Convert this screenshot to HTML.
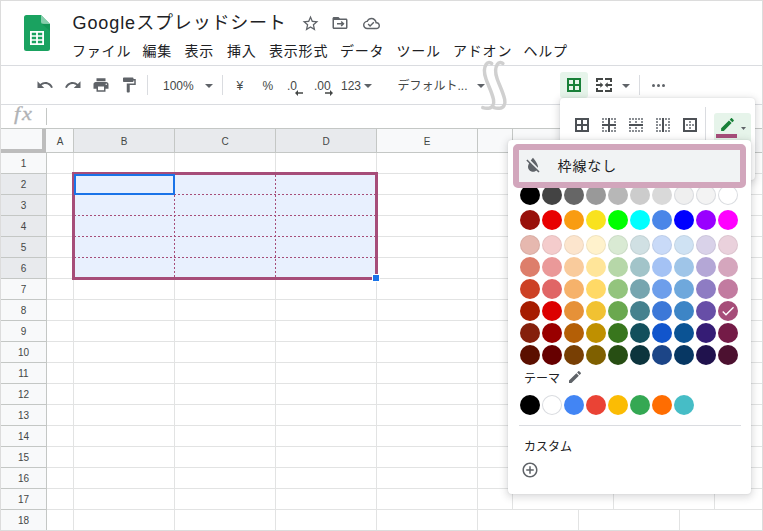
<!DOCTYPE html>
<html lang="ja"><head><meta charset="utf-8"><title>Google スプレッドシート</title>
<style>
html,body{margin:0;padding:0;}
body{width:763px;height:531px;overflow:hidden;background:#fff;position:relative;font-family:"Liberation Sans","Noto Sans CJK JP",sans-serif;color:#202124;}
#root{position:absolute;left:0;top:0;width:763px;height:531px;overflow:hidden;background:#fff;}
.a{position:absolute;}
.t{position:absolute;white-space:nowrap;line-height:1;}
.menu{font-size:14px;color:#202124;top:44px;letter-spacing:.8px;}
.tb{font-size:12px;color:#444746;}
.hl{position:absolute;height:1px;background:#e2e3e3;}
.vl{position:absolute;width:1px;background:#e2e3e3;}
.rh{position:absolute;left:1px;width:45px;height:20px;font-size:10px;color:#444746;text-align:center;line-height:22px;overflow:hidden;background:#f8f9fa;border-bottom:1px solid #c4c7c5;}
.rh.s{background:#e8eaed;}
.ch{position:absolute;top:129px;height:23px;font-size:10px;color:#444746;text-align:center;line-height:26px;overflow:hidden;background:#f8f9fa;border-right:1px solid #c4c7c5;}
.ch.s{background:#e8eaed;}
.c{position:absolute;width:20px;height:20px;border-radius:50%;}
svg{position:absolute;overflow:visible;}
</style></head><body><div id="root">

<!-- logo -->
<svg style="left:24px;top:15px" width="26" height="36" viewBox="0 0 26 36"><path d="M2.5 0H17l9 9v24.5a2.5 2.5 0 0 1-2.5 2.5h-21A2.5 2.5 0 0 1 0 33.500V2.5A2.500 2.500 0 0 1 2.500 0z" fill="#1aa260"/><path d="M17 0l9 9h-6.500A2.500 2.500 0 0 1 17 6.500z" fill="#87ceac"/><path d="M17.800 8.800L26 9v7z" fill="#0c8a4c" opacity=".5"/><path fill="#fff" fill-rule="evenodd" d="M6 16h14v14H6zM7.800 17.800v2.500h4.300v-2.500zM13.900 17.800v2.500h4.300v-2.500zM7.800 21.800v2.400h4.300v-2.400zM13.900 21.800v2.400h4.300v-2.400zM7.800 25.700v2.500h4.300v-2.500zM13.900 25.700v2.500h4.300v-2.500z"/></svg>
<div class="t" style="left:72.500px;top:13.500px;font-size:18px;color:#202124;letter-spacing:.8px;word-spacing:-5.500px;"><span style="letter-spacing:.9px">Google</span> スプレッドシート</div>
<svg style="left:301.100px;top:13.500px" width="19" height="19" viewBox="0 0 24 24"><path fill="#5f6368" d="M22 9.240l-7.190-.620L12 2 9.190 8.630 2 9.240l5.460 4.730L5.820 21 12 17.270 18.180 21l-1.630-7.030L22 9.240zM12 15.400l-3.760 2.270 1-4.280-3.320-2.880 4.380-.380L12 6.100l1.710 4.040 4.380.380-3.320 2.880 1 4.280L12 15.400z"/></svg>
<svg style="left:330.700px;top:14px" width="18" height="18" viewBox="0 0 24 24"><path fill="#5f6368" d="M20 6h-8l-2-2H4c-1.100 0-2 .900-2 2v12c0 1.100.900 2 2 2h16c1.100 0 2-.900 2-2V8c0-1.100-.900-2-2-2zm0 12H4V8h16v10zm-7.160-2.590L14.250 16.830 18 13l-3.750-3.830-1.410 1.420L14.170 12H8v2h6.170l-1.330 1.410z"/></svg>
<svg style="left:362.600px;top:14.600px" width="17" height="17" viewBox="0 0 24 24"><path fill="#5f6368" d="M19.350 10.040C18.670 6.590 15.640 4 12 4 9.110 4 6.600 5.640 5.350 8.040 2.340 8.360 0 10.910 0 14c0 3.310 2.690 6 6 6h13c2.760 0 5-2.240 5-5 0-2.640-2.050-4.780-4.650-4.960zM19 18H6c-2.210 0-4-1.790-4-4 0-2.050 1.530-3.760 3.560-3.970l1.070-.110.500-.950C8.080 7.140 9.940 6 12 6c2.620 0 4.880 1.860 5.390 4.430l.300 1.500 1.530.110c1.560.100 2.780 1.410 2.780 2.960 0 1.650-1.350 3-3 3zm-9-3.820l-2.090-2.090L6.500 13.500 10 17l6.010-6.010-1.410-1.410z"/></svg>
<div class="t menu" style="left:72px;">ファイル</div>
<div class="t menu" style="left:142.5px;">編集</div>
<div class="t menu" style="left:184.5px;">表示</div>
<div class="t menu" style="left:227px;">挿入</div>
<div class="t menu" style="left:269px;">表示形式</div>
<div class="t menu" style="left:340px;">データ</div>
<div class="t menu" style="left:396.5px;">ツール</div>
<div class="t menu" style="left:453px;">アドオン</div>
<div class="t menu" style="left:523.5px;">ヘルプ</div>
<div class="hl" style="left:0;top:65px;width:763px;background:#dadce0;"></div>
<div class="hl" style="left:0;top:104px;width:763px;background:#dadce0;"></div>
<div class="hl" style="left:0;top:128px;width:763px;background:#c4c7c5;"></div>
<svg style="left:35.5px;top:76px" width="18" height="18" viewBox="0 0 24 24"><path fill="#5f6368" d="M12.500 8c-2.650 0-5.050.990-6.900 2.600L2 7v9h9l-3.620-3.620c1.390-1.160 3.160-1.880 5.120-1.880 3.540 0 6.550 2.310 7.600 5.500l2.370-.780C21.080 11.030 17.150 8 12.500 8z"/></svg>
<svg style="left:64px;top:76px" width="18" height="18" viewBox="0 0 24 24"><path fill="#5f6368" d="M18.400 10.600C16.550 8.990 14.150 8 11.500 8c-4.650 0-8.580 3.030-9.960 7.220L3.900 16c1.050-3.190 4.050-5.500 7.600-5.500 1.950 0 3.730.720 5.120 1.880L13 16h9V7l-3.600 3.600z"/></svg>
<svg style="left:92px;top:75.5px" width="18" height="18" viewBox="0 0 24 24"><path fill="#5f6368" d="M19 8H5c-1.660 0-3 1.340-3 3v6h4v4h12v-4h4v-6c0-1.660-1.340-3-3-3zm-3 11H8v-5h8v5zm3-7c-.550 0-1-.450-1-1s.450-1 1-1 1 .450 1 1-.450 1-1 1zm-1-9H6v4h12V3z"/></svg>
<svg style="left:120px;top:75.5px" width="18" height="18" viewBox="0 0 24 24"><path fill="#5f6368" d="M18 4V3c0-.550-.450-1-1-1H5c-.550 0-1 .450-1 1v4c0 .550.450 1 1 1h12c.550 0 1-.450 1-1V6h1v4H9v11c0 .550.450 1 1 1h2c.550 0 1-.450 1-1v-9h8V4h-3z"/></svg>
<div class="vl" style="left:147px;top:75px;height:20px;background:#dadce0;"></div>
<div class="vl" style="left:222px;top:75px;height:20px;background:#dadce0;"></div>
<div class="vl" style="left:639px;top:75px;height:20px;background:#dadce0;"></div>
<div class="t tb" style="left:163px;top:79.500px;">100%</div>
<svg style="left:205px;top:84px" width="8" height="4" viewBox="0 0 8 4"><path fill="#5f6368" d="M0 0h8L4.0 4z"/></svg>
<div class="t tb" style="left:236.500px;top:79.500px;">¥</div>
<div class="t tb" style="left:262.500px;top:79.500px;">%</div>
<div class="t tb" style="left:287px;top:79.500px;">.0</div>
<svg style="left:295px;top:90px" width="8" height="6" viewBox="0 0 8 6"><path fill="#444746" d="M0 3l3-3v2.300h5v1.400H3V6z"/></svg>
<div class="t tb" style="left:314px;top:79.500px;">.00</div>
<svg style="left:325px;top:90px" width="8" height="6" viewBox="0 0 8 6"><path fill="#444746" d="M8 3L5 0v2.300H0v1.400h5V6z"/></svg>
<div class="t tb" style="left:341px;top:79.500px;">123</div>
<svg style="left:363.5px;top:84px" width="8" height="4" viewBox="0 0 8 4"><path fill="#5f6368" d="M0 0h8L4.0 4z"/></svg>
<div class="t tb" style="left:397.500px;top:79.500px;">デフォルト...</div>
<svg style="left:477px;top:84px" width="8" height="4" viewBox="0 0 8 4"><path fill="#5f6368" d="M0 0h8L4.0 4z"/></svg>
<svg style="left:470px;top:55px" width="50" height="60" viewBox="0 0 50 60"><g fill="none" stroke="#d0d0d0" stroke-width="3.500" stroke-linecap="round"><path d="M21.700 8.500C20.300 7 17.700 7 16.200 9.200 13.500 13 14 18 16 24 18.500 31 22 37.500 23.500 44.500 24.500 49.500 22.300 53.200 18.500 53.200 16.500 53.400 14.500 53.200 12.800 52.600"/><path transform="translate(11.200,0)" d="M21.700 8.500C20.300 7 17.700 7 16.200 9.200 13.500 13 14 18 16 24 18.500 31 22 37.500 23.500 44.500 24.500 49.500 22.300 53.200 18.500 53.200 16.500 53.400 14.500 53.200 12.800 52.600"/></g></svg>
<div class="a" style="left:560px;top:72px;width:28px;height:26px;background:#e6f4ea;border-radius:3px;"></div>
<svg style="left:567px;top:78px" width="14" height="14" viewBox="0 0 14 14" shape-rendering="crispEdges"><rect x="0" y="0" width="14" height="2" fill="#188038"/><rect x="0" y="12" width="14" height="2" fill="#188038"/><rect x="0" y="0" width="2" height="14" fill="#188038"/><rect x="12" y="0" width="2" height="14" fill="#188038"/><rect x="6" y="0" width="2" height="14" fill="#188038"/><rect x="0" y="6" width="14" height="2" fill="#188038"/></svg>
<svg style="left:596px;top:78px" width="16" height="14" viewBox="0 0 16 14" shape-rendering="crispEdges"><g fill="#444746"><path d="M0 0h7v2H2v2H0zM9 0h7v4h-2V2H9zM0 10h2v2h5v2H0zM14 10h2v4H9v-2h5zM0 6h5v2H0zM11 6h5v2h-5z"/></g><g fill="#444746" shape-rendering="geometricPrecision"><path d="M4.300 4.200L7.300 7l-3 2.800zM11.700 4.200L8.700 7l3 2.800z"/></g></svg>
<svg style="left:622px;top:84px" width="8" height="4" viewBox="0 0 8 4"><path fill="#5f6368" d="M0 0h8L4.0 4z"/></svg>
<div class="a" style="left:651.5px;top:83.500px;width:3px;height:3px;border-radius:50%;background:#5f6368;"></div>
<div class="a" style="left:656.5px;top:83.500px;width:3px;height:3px;border-radius:50%;background:#5f6368;"></div>
<div class="a" style="left:661.5px;top:83.500px;width:3px;height:3px;border-radius:50%;background:#5f6368;"></div>
<div class="t" style="left:14px;top:102px;font-family:'Liberation Serif',serif;font-style:italic;font-size:20px;letter-spacing:1.500px;color:#b0b2b5;line-height:24px;-webkit-text-stroke:.3px #b0b2b5;transform:scale(1.120,.940);transform-origin:0 0;">fx</div>
<div class="vl" style="left:46px;top:108px;height:17px;background:#c4c7c5;"></div>
<!-- grid -->
<div class="hl" style="left:46px;top:152px;width:716px;"></div>
<div class="hl" style="left:46px;top:173px;width:716px;"></div>
<div class="hl" style="left:46px;top:194px;width:716px;"></div>
<div class="hl" style="left:46px;top:215px;width:716px;"></div>
<div class="hl" style="left:46px;top:236px;width:716px;"></div>
<div class="hl" style="left:46px;top:257px;width:716px;"></div>
<div class="hl" style="left:46px;top:278px;width:716px;"></div>
<div class="hl" style="left:46px;top:299px;width:716px;"></div>
<div class="hl" style="left:46px;top:320px;width:716px;"></div>
<div class="hl" style="left:46px;top:341px;width:716px;"></div>
<div class="hl" style="left:46px;top:362px;width:716px;"></div>
<div class="hl" style="left:46px;top:383px;width:716px;"></div>
<div class="hl" style="left:46px;top:404px;width:716px;"></div>
<div class="hl" style="left:46px;top:425px;width:716px;"></div>
<div class="hl" style="left:46px;top:446px;width:716px;"></div>
<div class="hl" style="left:46px;top:467px;width:716px;"></div>
<div class="hl" style="left:46px;top:488px;width:716px;"></div>
<div class="hl" style="left:46px;top:509px;width:716px;"></div>
<div class="hl" style="left:46px;top:530px;width:716px;"></div>
<div class="vl" style="left:73px;top:152px;height:378px;"></div>
<div class="vl" style="left:174px;top:152px;height:378px;"></div>
<div class="vl" style="left:275px;top:152px;height:378px;"></div>
<div class="vl" style="left:376px;top:152px;height:378px;"></div>
<div class="vl" style="left:477px;top:152px;height:378px;"></div>
<div class="vl" style="left:578px;top:509px;height:21px;"></div>
<div class="vl" style="left:679px;top:509px;height:21px;"></div>
<div class="vl" style="left:512px;top:488px;height:21px;"></div>
<div class="vl" style="left:613px;top:488px;height:21px;"></div>
<div class="vl" style="left:714px;top:488px;height:21px;"></div>
<div class="a" style="left:1px;top:129px;width:761px;height:23px;background:#f8f9fa;border-bottom:1px solid #c4c7c5;"></div>
<div class="ch" style="left:47px;width:26px;">A</div>
<div class="ch s" style="left:74px;width:100px;">B</div>
<div class="ch s" style="left:175px;width:100px;">C</div>
<div class="ch s" style="left:276px;width:100px;">D</div>
<div class="ch" style="left:377px;width:100px;">E</div>
<div class="ch" style="left:478px;width:34px;"></div>
<div class="a" style="left:1px;top:129px;width:41px;height:20px;background:#f8f9fa;border-right:4px solid #bdbdbd;border-bottom:4px solid #bdbdbd;"></div>
<div class="rh" style="top:153px;">1</div>
<div class="rh s" style="top:174px;">2</div>
<div class="rh s" style="top:195px;">3</div>
<div class="rh s" style="top:216px;">4</div>
<div class="rh s" style="top:237px;">5</div>
<div class="rh s" style="top:258px;">6</div>
<div class="rh" style="top:279px;">7</div>
<div class="rh" style="top:300px;">8</div>
<div class="rh" style="top:321px;">9</div>
<div class="rh" style="top:342px;">10</div>
<div class="rh" style="top:363px;">11</div>
<div class="rh" style="top:384px;">12</div>
<div class="rh" style="top:405px;">13</div>
<div class="rh" style="top:426px;">14</div>
<div class="rh" style="top:447px;">15</div>
<div class="rh" style="top:468px;">16</div>
<div class="rh" style="top:489px;">17</div>
<div class="rh" style="top:510px;">18</div>
<div class="vl" style="left:46px;top:152px;height:378px;background:#c4c7c5;"></div>
<div class="a" style="left:75px;top:175px;width:300px;height:102px;background:#e8f0fe;"></div>
<div class="a" style="left:75px;top:215px;width:300px;height:1px;background:linear-gradient(90deg,#a64d79 0 2px,transparent 2px 4px) 3px 0/4px 1px repeat-x;"></div>
<div class="a" style="left:75px;top:236px;width:300px;height:1px;background:linear-gradient(90deg,#a64d79 0 2px,transparent 2px 4px) 3px 0/4px 1px repeat-x;"></div>
<div class="a" style="left:75px;top:257px;width:300px;height:1px;background:linear-gradient(90deg,#a64d79 0 2px,transparent 2px 4px) 3px 0/4px 1px repeat-x;"></div>
<div class="a" style="left:175px;top:194px;width:200px;height:1px;background:linear-gradient(90deg,#a64d79 0 2px,transparent 2px 4px) 3px 0/4px 1px repeat-x;"></div>
<div class="a" style="left:174px;top:195px;width:1px;height:82px;background:linear-gradient(180deg,#a64d79 0 2px,transparent 2px 4px) 0 0/1px 4px repeat-y;"></div>
<div class="a" style="left:275px;top:175px;width:1px;height:102px;background:linear-gradient(180deg,#a64d79 0 2px,transparent 2px 4px) 0 0/1px 4px repeat-y;"></div>
<div class="a" style="left:72px;top:172px;width:300px;height:102px;border:3px solid #a64d79;"></div>
<div class="a" style="left:74px;top:174px;width:97px;height:17px;border:2px solid #1a73e8;"></div>
<div class="a" style="left:372px;top:274px;width:6px;height:6px;background:#1a73e8;border:1px solid #fff;"></div>
<!-- border popup -->
<div class="a" style="left:560px;top:98px;width:194.500px;height:82px;background:#fff;border-radius:4px;box-shadow:0 2px 7px 2px rgba(60,64,67,.16),0 0 2px rgba(60,64,67,.12);"></div>
<svg style="left:575px;top:118px" width="14" height="14" viewBox="0 0 14 14" shape-rendering="crispEdges"><rect x="0" y="0" width="14" height="2" fill="#4d5156"/><rect x="0" y="12" width="14" height="2" fill="#4d5156"/><rect x="0" y="0" width="2" height="14" fill="#4d5156"/><rect x="12" y="0" width="2" height="14" fill="#4d5156"/><rect x="6" y="0" width="2" height="14" fill="#4d5156"/><rect x="0" y="6" width="14" height="2" fill="#4d5156"/></svg>
<svg style="left:602px;top:118px" width="14" height="14" viewBox="0 0 14 14" shape-rendering="crispEdges"><rect x="0" y="0" width="2" height="2" fill="#8a8e93"/><rect x="0" y="12" width="2" height="2" fill="#8a8e93"/><rect x="3" y="0" width="2" height="2" fill="#8a8e93"/><rect x="3" y="12" width="2" height="2" fill="#8a8e93"/><rect x="9" y="0" width="2" height="2" fill="#8a8e93"/><rect x="9" y="12" width="2" height="2" fill="#8a8e93"/><rect x="12" y="0" width="2" height="2" fill="#8a8e93"/><rect x="12" y="12" width="2" height="2" fill="#8a8e93"/><rect x="0" y="3" width="2" height="2" fill="#8a8e93"/><rect x="12" y="3" width="2" height="2" fill="#8a8e93"/><rect x="0" y="9" width="2" height="2" fill="#8a8e93"/><rect x="12" y="9" width="2" height="2" fill="#8a8e93"/><rect x="6" y="0" width="2" height="14" fill="#4d5156"/><rect x="0" y="6" width="14" height="2" fill="#4d5156"/></svg>
<svg style="left:629px;top:118px" width="14" height="14" viewBox="0 0 14 14" shape-rendering="crispEdges"><rect x="0" y="0" width="2" height="2" fill="#8a8e93"/><rect x="0" y="12" width="2" height="2" fill="#8a8e93"/><rect x="3" y="0" width="2" height="2" fill="#8a8e93"/><rect x="3" y="12" width="2" height="2" fill="#8a8e93"/><rect x="6" y="0" width="2" height="2" fill="#8a8e93"/><rect x="6" y="12" width="2" height="2" fill="#8a8e93"/><rect x="9" y="0" width="2" height="2" fill="#8a8e93"/><rect x="9" y="12" width="2" height="2" fill="#8a8e93"/><rect x="12" y="0" width="2" height="2" fill="#8a8e93"/><rect x="12" y="12" width="2" height="2" fill="#8a8e93"/><rect x="0" y="3" width="2" height="2" fill="#8a8e93"/><rect x="6" y="3" width="2" height="2" fill="#8a8e93"/><rect x="12" y="3" width="2" height="2" fill="#8a8e93"/><rect x="0" y="9" width="2" height="2" fill="#8a8e93"/><rect x="6" y="9" width="2" height="2" fill="#8a8e93"/><rect x="12" y="9" width="2" height="2" fill="#8a8e93"/><rect x="0" y="6" width="14" height="2" fill="#4d5156"/></svg>
<svg style="left:656px;top:118px" width="14" height="14" viewBox="0 0 14 14" shape-rendering="crispEdges"><rect x="0" y="0" width="2" height="2" fill="#8a8e93"/><rect x="12" y="0" width="2" height="2" fill="#8a8e93"/><rect x="0" y="3" width="2" height="2" fill="#8a8e93"/><rect x="12" y="3" width="2" height="2" fill="#8a8e93"/><rect x="0" y="6" width="2" height="2" fill="#8a8e93"/><rect x="12" y="6" width="2" height="2" fill="#8a8e93"/><rect x="0" y="9" width="2" height="2" fill="#8a8e93"/><rect x="12" y="9" width="2" height="2" fill="#8a8e93"/><rect x="0" y="12" width="2" height="2" fill="#8a8e93"/><rect x="12" y="12" width="2" height="2" fill="#8a8e93"/><rect x="3" y="0" width="2" height="2" fill="#8a8e93"/><rect x="3" y="6" width="2" height="2" fill="#8a8e93"/><rect x="3" y="12" width="2" height="2" fill="#8a8e93"/><rect x="9" y="0" width="2" height="2" fill="#8a8e93"/><rect x="9" y="6" width="2" height="2" fill="#8a8e93"/><rect x="9" y="12" width="2" height="2" fill="#8a8e93"/><rect x="6" y="0" width="2" height="14" fill="#4d5156"/></svg>
<svg style="left:683px;top:118px" width="14" height="14" viewBox="0 0 14 14" shape-rendering="crispEdges"><rect x="0" y="0" width="14" height="2" fill="#4d5156"/><rect x="0" y="12" width="14" height="2" fill="#4d5156"/><rect x="0" y="0" width="2" height="14" fill="#4d5156"/><rect x="12" y="0" width="2" height="14" fill="#4d5156"/><rect x="6" y="3" width="2" height="2" fill="#8a8e93"/><rect x="3" y="6" width="2" height="2" fill="#8a8e93"/><rect x="6" y="6" width="2" height="2" fill="#8a8e93"/><rect x="9" y="6" width="2" height="2" fill="#8a8e93"/><rect x="6" y="9" width="2" height="2" fill="#8a8e93"/></svg>
<div class="vl" style="left:705px;top:107px;height:33px;background:#dadce0;"></div>
<div class="a" style="left:714px;top:113px;width:37px;height:30px;background:#e6f4ea;border-radius:3px;"></div>
<svg style="left:718.5px;top:115.5px" width="17" height="17" viewBox="0 0 24 24"><path fill="#188038" d="M3 17.250V21h3.750L17.810 9.940l-3.750-3.750L3 17.250zM20.710 7.040c.390-.390.390-1.020 0-1.410l-2.340-2.340c-.390-.390-1.020-.390-1.410 0l-1.830 1.830 3.750 3.750 1.830-1.830z"/></svg>
<div class="a" style="left:716px;top:134px;width:21px;height:4px;background:#a64d79;"></div>
<svg style="left:741px;top:127px" width="5" height="3" viewBox="0 0 5 3"><path fill="#5f6368" d="M0 0h5L2.5 3z"/></svg>
<!-- color popup -->
<div class="a" style="left:508px;top:140px;width:243px;height:354px;background:#fff;border-radius:4px;box-shadow:0 2px 7px 2px rgba(60,64,67,.16),0 0 2px rgba(60,64,67,.12);"></div>
<div class="c" style="left:520px;top:185px;background:#000000;"></div>
<div class="c" style="left:542px;top:185px;background:#434343;"></div>
<div class="c" style="left:564px;top:185px;background:#666666;"></div>
<div class="c" style="left:586px;top:185px;background:#999999;"></div>
<div class="c" style="left:608px;top:185px;background:#b7b7b7;"></div>
<div class="c" style="left:630px;top:185px;background:#cccccc;"></div>
<div class="c" style="left:652px;top:185px;background:#d9d9d9;"></div>
<div class="c" style="left:674px;top:185px;background:#efefef;box-shadow:inset 0 0 0 1px #dadce0;"></div>
<div class="c" style="left:696px;top:185px;background:#f3f3f3;box-shadow:inset 0 0 0 1px #dadce0;"></div>
<div class="c" style="left:718px;top:185px;background:#ffffff;box-shadow:inset 0 0 0 1px #dadce0;"></div>
<div class="c" style="left:520px;top:210px;background:#98100a;"></div>
<div class="c" style="left:542px;top:210px;background:#e80000;"></div>
<div class="c" style="left:564px;top:210px;background:#f99c12;"></div>
<div class="c" style="left:586px;top:210px;background:#f9e21e;"></div>
<div class="c" style="left:608px;top:210px;background:#00ff00;"></div>
<div class="c" style="left:630px;top:210px;background:#00ffff;"></div>
<div class="c" style="left:652px;top:210px;background:#4a86e8;"></div>
<div class="c" style="left:674px;top:210px;background:#0000ff;"></div>
<div class="c" style="left:696px;top:210px;background:#9900ff;"></div>
<div class="c" style="left:718px;top:210px;background:#ff00ff;"></div>
<div class="c" style="left:520px;top:235px;background:#e6b8af;box-shadow:inset 0 0 0 1px rgba(0,0,0,.06);"></div>
<div class="c" style="left:542px;top:235px;background:#f4cccc;box-shadow:inset 0 0 0 1px rgba(0,0,0,.06);"></div>
<div class="c" style="left:564px;top:235px;background:#fce5cd;box-shadow:inset 0 0 0 1px rgba(0,0,0,.06);"></div>
<div class="c" style="left:586px;top:235px;background:#fff2cc;box-shadow:inset 0 0 0 1px rgba(0,0,0,.06);"></div>
<div class="c" style="left:608px;top:235px;background:#d9ead3;box-shadow:inset 0 0 0 1px rgba(0,0,0,.06);"></div>
<div class="c" style="left:630px;top:235px;background:#d0e0e3;box-shadow:inset 0 0 0 1px rgba(0,0,0,.06);"></div>
<div class="c" style="left:652px;top:235px;background:#c9daf8;box-shadow:inset 0 0 0 1px rgba(0,0,0,.06);"></div>
<div class="c" style="left:674px;top:235px;background:#cfe2f3;box-shadow:inset 0 0 0 1px rgba(0,0,0,.06);"></div>
<div class="c" style="left:696px;top:235px;background:#d9d2e9;box-shadow:inset 0 0 0 1px rgba(0,0,0,.06);"></div>
<div class="c" style="left:718px;top:235px;background:#ead1dc;box-shadow:inset 0 0 0 1px rgba(0,0,0,.06);"></div>
<div class="c" style="left:520px;top:257px;background:#dd7e6b;"></div>
<div class="c" style="left:542px;top:257px;background:#ea9999;"></div>
<div class="c" style="left:564px;top:257px;background:#f9cb9c;"></div>
<div class="c" style="left:586px;top:257px;background:#ffe599;"></div>
<div class="c" style="left:608px;top:257px;background:#b6d7a8;"></div>
<div class="c" style="left:630px;top:257px;background:#a2c4c9;"></div>
<div class="c" style="left:652px;top:257px;background:#a4c2f4;"></div>
<div class="c" style="left:674px;top:257px;background:#9fc5e8;"></div>
<div class="c" style="left:696px;top:257px;background:#b4a7d6;"></div>
<div class="c" style="left:718px;top:257px;background:#d5a6bd;"></div>
<div class="c" style="left:520px;top:279px;background:#cc4125;"></div>
<div class="c" style="left:542px;top:279px;background:#e06666;"></div>
<div class="c" style="left:564px;top:279px;background:#f6b26b;"></div>
<div class="c" style="left:586px;top:279px;background:#ffd966;"></div>
<div class="c" style="left:608px;top:279px;background:#93c47d;"></div>
<div class="c" style="left:630px;top:279px;background:#76a5af;"></div>
<div class="c" style="left:652px;top:279px;background:#6d9eeb;"></div>
<div class="c" style="left:674px;top:279px;background:#6fa8dc;"></div>
<div class="c" style="left:696px;top:279px;background:#8e7cc3;"></div>
<div class="c" style="left:718px;top:279px;background:#c27ba0;"></div>
<div class="c" style="left:520px;top:301px;background:#a61c00;"></div>
<div class="c" style="left:542px;top:301px;background:#dc0000;"></div>
<div class="c" style="left:564px;top:301px;background:#e69138;"></div>
<div class="c" style="left:586px;top:301px;background:#f1c232;"></div>
<div class="c" style="left:608px;top:301px;background:#6aa84f;"></div>
<div class="c" style="left:630px;top:301px;background:#45818e;"></div>
<div class="c" style="left:652px;top:301px;background:#3c78d8;"></div>
<div class="c" style="left:674px;top:301px;background:#3d85c6;"></div>
<div class="c" style="left:696px;top:301px;background:#674ea7;"></div>
<div class="c" style="left:718px;top:301px;background:#a64d79;"></div>
<div class="c" style="left:520px;top:323px;background:#85200c;"></div>
<div class="c" style="left:542px;top:323px;background:#990000;"></div>
<div class="c" style="left:564px;top:323px;background:#b45f06;"></div>
<div class="c" style="left:586px;top:323px;background:#bf9000;"></div>
<div class="c" style="left:608px;top:323px;background:#38761d;"></div>
<div class="c" style="left:630px;top:323px;background:#134f5c;"></div>
<div class="c" style="left:652px;top:323px;background:#1155cc;"></div>
<div class="c" style="left:674px;top:323px;background:#0b5394;"></div>
<div class="c" style="left:696px;top:323px;background:#351c75;"></div>
<div class="c" style="left:718px;top:323px;background:#741b47;"></div>
<div class="c" style="left:520px;top:345px;background:#5b0f00;"></div>
<div class="c" style="left:542px;top:345px;background:#660000;"></div>
<div class="c" style="left:564px;top:345px;background:#783f04;"></div>
<div class="c" style="left:586px;top:345px;background:#7f6000;"></div>
<div class="c" style="left:608px;top:345px;background:#274e13;"></div>
<div class="c" style="left:630px;top:345px;background:#0c343d;"></div>
<div class="c" style="left:652px;top:345px;background:#1c4587;"></div>
<div class="c" style="left:674px;top:345px;background:#073763;"></div>
<div class="c" style="left:696px;top:345px;background:#20124d;"></div>
<div class="c" style="left:718px;top:345px;background:#4c1130;"></div>
<svg style="left:720px;top:303px" width="16" height="16" viewBox="0 0 24 24"><path fill="#fff" d="M9 16.170L4.830 12l-1.420 1.410L9 19 21 7l-1.410-1.410z"/></svg>
<div class="a" style="left:513px;top:144px;width:221px;height:32px;border:6px solid #d2a6bc;border-radius:5px;background:#f1f3f4;"></div>
<svg style="left:523px;top:154.5px" width="20" height="20" viewBox="0 0 24 24"><path fill="#5f6368" d="M18 14c0-4-6-10.800-6-10.800s-1.330 1.510-2.730 3.520l8.590 8.590c.090-.420.140-.860.140-1.310zm-.880 3.120L12.500 12.500 5.270 5.270 4 6.550l3.320 3.320C6.550 11.320 6 12.790 6 14c0 3.310 2.690 6 6 6 1.520 0 2.900-.570 3.960-1.500l2.630 2.630 1.270-1.270-2.740-2.740z"/></svg>
<div class="t" style="left:557.500px;top:158.500px;font-size:14px;color:#202124;letter-spacing:.9px;">枠線なし</div>
<div class="t" style="left:524px;top:373px;font-size:12px;color:#202124;">テーマ</div>
<svg style="left:566.5px;top:369px" width="16" height="16" viewBox="0 0 24 24"><path fill="#5f6368" d="M3 17.250V21h3.750L17.810 9.940l-3.750-3.750L3 17.250zM20.710 7.040c.390-.390.390-1.020 0-1.410l-2.340-2.340c-.390-.390-1.020-.390-1.410 0l-1.830 1.830 3.750 3.750 1.830-1.830z"/></svg>
<div class="c" style="left:520px;top:395px;background:#000000;"></div>
<div class="c" style="left:542px;top:395px;background:#ffffff;box-shadow:inset 0 0 0 1px #dadce0;"></div>
<div class="c" style="left:564px;top:395px;background:#4285f4;"></div>
<div class="c" style="left:586px;top:395px;background:#ea4335;"></div>
<div class="c" style="left:608px;top:395px;background:#fbbc04;"></div>
<div class="c" style="left:630px;top:395px;background:#34a853;"></div>
<div class="c" style="left:652px;top:395px;background:#ff6d01;"></div>
<div class="c" style="left:674px;top:395px;background:#46bdc6;"></div>
<div class="hl" style="left:519px;top:425px;width:222px;background:#dadce0;"></div>
<div class="t" style="left:524px;top:440.500px;font-size:12px;color:#202124;">カスタム</div>
<svg style="left:521px;top:460.5px" width="18" height="18" viewBox="0 0 24 24"><path fill="#5f6368" d="M13 7h-2v4H7v2h4v4h2v-4h4v-2h-4V7zm-1-5C6.480 2 2 6.480 2 12s4.480 10 10 10 10-4.480 10-10S17.520 2 12 2zm0 18c-4.410 0-8-3.590-8-8s3.590-8 8-8 8 3.590 8 8-3.590 8-8 8z"/></svg>
<div class="a" style="left:0;top:0;width:761px;height:529px;border:1px solid #dcdcdc;pointer-events:none;"></div>
</div></body></html>
